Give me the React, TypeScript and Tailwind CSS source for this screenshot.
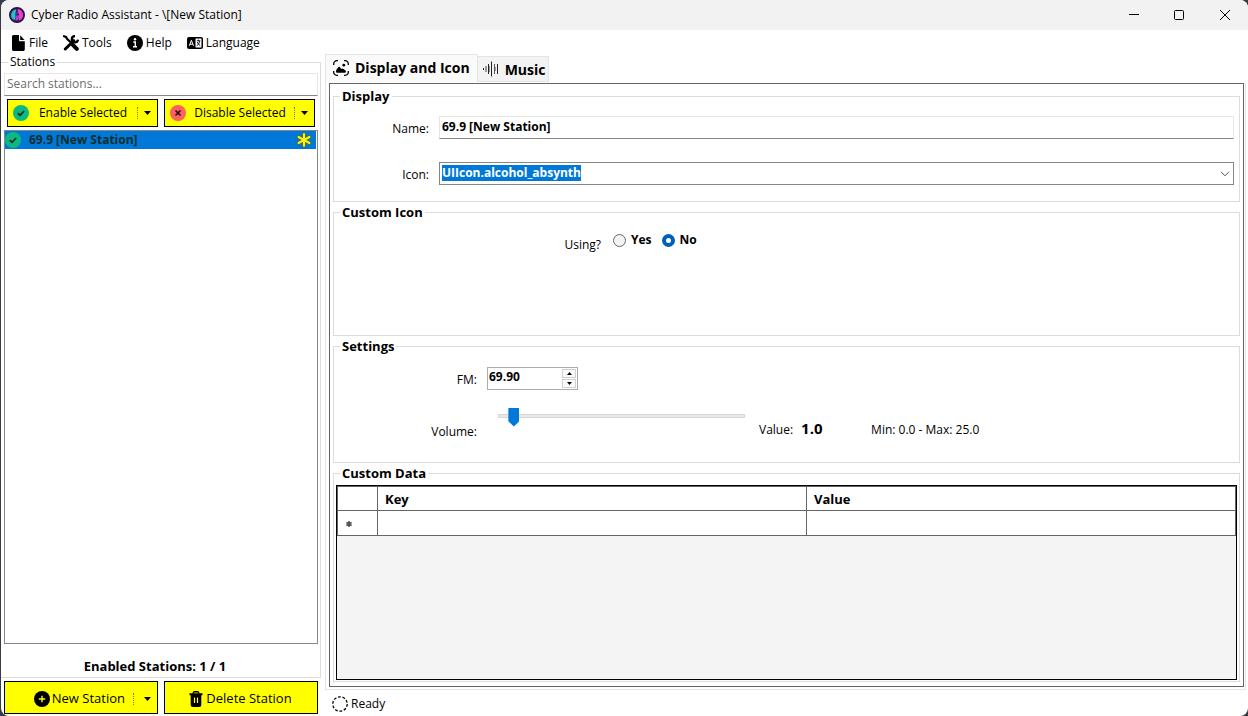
import { useState, type ReactNode } from "react"
import clsx from "clsx"

const menuItems = [
  { label: "File", icon: <FileIcon /> },
  { label: "Tools", icon: <ToolsIcon /> },
  { label: "Help", icon: <InfoIcon /> },
  { label: "Language", icon: <LanguageIcon /> },
]

const stations = [{ id: 1, name: "69.9 [New Station]", enabled: true }]

function LogoIcon() {
  return (
    <svg className="size-4" viewBox="0 0 16 16">
      <circle cx="8" cy="8" r="7.3" fill="#3a1a55" stroke="#2a1442" strokeWidth="1.4" />
      <path d="M7.200 2.200A6 6 0 0 0 3.800 12.300l1.800.7 1-3V5.500z" fill="#19c5c9" />
      <path d="M8.800 2A6.100 6.100 0 0 1 12 12.600l-2 .8-1-3.600 1.200-2.600-1.600-1.600z" fill="#e83fd0" />
      <path d="M6.600 5.500l1.900-1.700v4l1.200 5.200-3.100.6z" fill="#5b2a8c" />
      <path d="M6.500 10.200l2-2.200.6 5-2.400.6z" fill="#b344c6" />
    </svg>
  )
}

function FileIcon() {
  return (
    <svg className="size-4" viewBox="0 0 16 16" fill="#000">
      <path d="M3.600 0H9v5.200c0 .7.5 1.100 1.100 1.100h4.700v7.900c0 1-.7 1.800-1.600 1.800H3.600C2.700 16 2 15.200 2 14.200V1.800C2 .8 2.700 0 3.600 0z" />
      <path d="M10.200.3l4.300 4.700h-4.300z" />
    </svg>
  )
}

function ToolsIcon() {
  return (
    <svg className="size-4" viewBox="0 0 16 16" fill="none" stroke="#000">
      <path d="M2.300 14l8.500-8.300" strokeWidth="3" strokeLinecap="round" />
      <path d="M12 1.200a3.100 3.100 0 1 0 3 3.400" strokeWidth="2.300" />
      <path d="M1 1.200l2 .8 1.200 2 3.500 3.300" strokeWidth="2.200" strokeLinecap="round" />
      <path d="M9.800 9.800l4 4" strokeWidth="4" strokeLinecap="round" />
    </svg>
  )
}

function InfoIcon() {
  return (
    <svg className="size-4" viewBox="0 0 16 16">
      <circle cx="8" cy="8" r="8" fill="#000" />
      <circle cx="8" cy="4.300" r="1.200" fill="#fff" />
      <path d="M6.300 7h2v4.500M6 11.700h4" fill="none" stroke="#fff" strokeWidth="1.400" />
    </svg>
  )
}

function LanguageIcon() {
  return (
    <svg className="size-4" viewBox="0 0 16 16" fill="none">
      <rect x="0" y="2" width="16" height="12" rx="2" fill="#000" />
      <rect x="8.500" y="3.500" width="6" height="9" rx=".5" fill="#fff" />
      <path d="M2.300 10.800L4.400 5.300l2.100 5.500M3 9.200h2.800" stroke="#fff" />
      <path d="M9.800 5.800h3.500M11.500 4.600v1.200M12.700 6c-.3 2-1.400 3.800-3 4.800M10.300 7c.6 1.600 1.600 2.900 3 3.800" stroke="#000" strokeWidth=".9" />
    </svg>
  )
}

function EnabledIcon() {
  return (
    <svg className="size-4 shrink-0" viewBox="0 0 16 16" fill="none">
      <circle cx="8" cy="8" r="8" fill="#0bba82" />
      <path d="M4.800 8.200l2.200 2.100L11.200 6" stroke="#10251c" strokeWidth="1.700" />
    </svg>
  )
}

function DisabledIcon() {
  return (
    <svg className="size-4 shrink-0" viewBox="0 0 16 16" fill="none">
      <circle cx="8" cy="8" r="8" fill="#fe5f5f" />
      <path d="M5.500 5.500l5 5M10.500 5.500l-5 5" stroke="#2b0f12" strokeWidth="1.700" />
    </svg>
  )
}

function PlusIcon() {
  return (
    <svg className="size-4" viewBox="0 0 16 16">
      <circle cx="8" cy="8" r="8" fill="#000" />
      <path d="M8 4.800v6.400M4.800 8h6.400" stroke="#ff0" strokeWidth="1.400" />
    </svg>
  )
}

function TrashIcon() {
  return (
    <svg className="size-4" viewBox="0 0 16 16">
      <path d="M5.200 2.500c0-1.200.6-1.700 1.500-1.700h2.600c.9 0 1.500.5 1.500 1.700" fill="none" stroke="#000" strokeWidth="1.500" />
      <path d="M1.500 2.200h13v2h-13z" />
      <path d="M2.700 4h10.600v9.700c0 1.300-.9 2.300-2.200 2.300H4.900c-1.300 0-2.200-1-2.200-2.300z" />
      <path d="M6.500 6.500v5.500M9.500 6.500v5.500" stroke="#ff0" strokeWidth="1.200" />
    </svg>
  )
}

function AsteriskIcon() {
  return (
    <svg className="size-4 shrink-0" viewBox="0 0 16 16">
      <g strokeLinecap="round">
        <path d="M8 2.200v11.600M2.600 5l10.800 6M13.400 5L2.600 11" stroke="#5c6200" strokeWidth="3.600" />
        <path d="M8 2.200v11.600M2.600 5l10.800 6M13.400 5L2.600 11" stroke="#f7f01a" strokeWidth="2.200" />
      </g>
    </svg>
  )
}

function PictureIcon() {
  return (
    <svg className="size-4" viewBox="0 0 16 16" fill="none" stroke="#000" strokeWidth="1.300">
      <path d="M.7 5V3.800A3.100 3.100 0 0 1 3.800.7H5M11 .7h1.200a3.100 3.100 0 0 1 3.100 3.100V5M15.300 11v1.200a3.100 3.100 0 0 1-3.100 3.100H11M5 15.300H3.800a3.100 3.100 0 0 1-3.100-3.100V11" />
      <path d="M3 11.400c0-1.700 1.300-2.700 1.900-3.700.7-1.300 1.700-1.300 2.500 0l.9 1.300c.6-.7 1.600-.7 2.200 0 .9.900 2.500 1.400 2.500 2.600 0 .8-.5 1.200-1.200 1.200H4.300c-.8 0-1.300-.5-1.300-1.400z" fill="#000" stroke="none" />
      <circle cx="10.800" cy="5.200" r="1.400" fill="#000" stroke="none" />
    </svg>
  )
}

function WaveIcon() {
  return (
    <svg className="size-4" viewBox="0 0 16 16" fill="none" strokeWidth="1">
      <path d="M.5 7v2M5.500 3v10M8.500.5v15M14.500 3v10" stroke="#222" />
      <path d="M2.500 5v6M3.500 5v6M6.500 5v6M11.500 3v10M12.500 6v4" stroke="#999" />
      <path d="M11.500 3v10" stroke="#555" />
    </svg>
  )
}

function SplitButton({ label, icon }: { label: string; icon: ReactNode }) {
  return (
    <div className="flex border border-black bg-[#ffff00]">
      <button type="button" className="flex flex-1 items-center pl-[5px]">
        {icon}
        <span className="flex-1 text-center">{label}</span>
      </button>
      <button type="button" aria-label={`${label} options`} className="flex w-5 items-center">
        <span className="h-3 border-l border-dotted border-gray-500" />
        <svg className="mx-auto h-1 w-[7px]" viewBox="0 0 7 4">
          <path d="M0 0h7L3.500 4z" />
        </svg>
      </button>
    </div>
  )
}

function GroupBox({ title, className, children }: { title: string; className?: string; children: ReactNode }) {
  return (
    <fieldset className={clsx("min-w-0 border border-[#dcdcdc]", className)}>
      <legend className="ml-1.5 px-0.5 text-[13px] leading-4 font-bold">{title}</legend>
      {children}
    </fieldset>
  )
}

function StationsPanel() {
  const [search, setSearch] = useState("")
  const enabledCount = stations.filter((s) => s.enabled).length

  return (
    <aside className="flex w-80 shrink-0 flex-col">
      <fieldset className="flex min-h-0 flex-1 flex-col border border-l-0 border-[#dcdcdc] pr-0.5 pl-[3px]">
        <legend className="ml-1 px-0.5 leading-4">Stations</legend>
        <input
          type="search"
          aria-label="Search stations"
          placeholder="Search stations..."
          value={search}
          onChange={(e) => setSearch(e.target.value)}
          className="mt-[3px] h-[23px] w-full border border-[#e6e6e6] border-b-[#868686] px-0.5 pb-0.5 outline-none placeholder:text-[#6d6d6d]"
        />
        <div className="mx-[3px] mt-[3px] grid h-7 grid-cols-2 gap-1.5">
          <SplitButton label="Enable Selected" icon={<EnabledIcon />} />
          <SplitButton label="Disable Selected" icon={<DisabledIcon />} />
        </div>
        <ul className="mt-[3px] min-h-0 flex-1 border border-[#828790] pr-px">
          {stations.map((station) => (
            <li key={station.id} className="flex h-[18px] items-center bg-[#0078d7] pr-1 font-bold text-[#0a2d2a]">
              <EnabledIcon />
              <span className="flex-1 pl-2">{station.name}</span>
              <AsteriskIcon />
            </li>
          ))}
        </ul>
        <p className="flex h-[33px] items-end justify-center pr-3 pb-[3px] text-[13px] leading-4 font-bold">
          Enabled Stations: {enabledCount} / {stations.length}
        </p>
      </fieldset>
      <div className="mx-[3px] mt-[3px] mb-0.5 grid h-[33px] grid-cols-2 gap-1.5 text-[13px]">
        <div className="flex border border-black bg-[#ffff00] pt-0.5">
          <button type="button" className="flex flex-1 items-center justify-end gap-0.5 pr-2 whitespace-nowrap">
            <PlusIcon />
            New Station
          </button>
          <button type="button" aria-label="New Station options" className="flex w-6 items-center">
            <span className="h-3 border-l border-dotted border-gray-500" />
            <svg className="ml-2.5 h-1 w-[7px]" viewBox="0 0 7 4">
              <path d="M0 0h7L3.500 4z" />
            </svg>
          </button>
        </div>
        <button type="button" className="flex items-center justify-center gap-0.5 border border-black bg-[#ffff00] pt-0.5 pr-0.5">
          <TrashIcon />
          Delete Station
        </button>
      </div>
    </aside>
  )
}

function DisplayTab() {
  const [name, setName] = useState("69.9 [New Station]")
  const [usingIcon, setUsingIcon] = useState(false)
  const [fm, setFm] = useState(69.9)
  const [volume, setVolume] = useState(1)

  return (
    <div className="flex min-h-0 flex-1 flex-col gap-0.5 border border-[#646464] px-[3px] pt-1 pb-1">
      <GroupBox title="Display" className="h-[114px]">
        <div className="mt-3 flex flex-col gap-[23px] pr-[5px]">
          <div className="flex h-[23px] gap-2.5">
            <label htmlFor="name" className="w-[95px] pt-[5px] text-right leading-4">Name:</label>
            <input
              id="name"
              value={name}
              onChange={(e) => setName(e.target.value)}
              className="min-w-0 flex-1 border border-[#e6e6e6] border-b-[#868686] px-0.5 pb-0.5 font-bold outline-none"
            />
          </div>
          <div className="flex h-[23px] gap-2.5">
            <label htmlFor="icon" className="w-[95px] pt-[5px] text-right leading-4">Icon:</label>
            <div className="flex min-w-0 flex-1 items-start justify-between border border-[#868686] px-0.5 pt-0.5">
              <select id="icon" className="field-sizing-content h-4 appearance-none bg-[#0078d7] leading-4 font-bold text-white outline-none">
                <option>UIIcon.alcohol_absynth</option>
              </select>
              <svg className="mt-1.5 mr-px h-1.5 w-2.5" viewBox="0 0 10 6" fill="none" stroke="#555">
                <path d="M1 .8l4 4 4-4" />
              </svg>
            </div>
          </div>
        </div>
      </GroupBox>

      <GroupBox title="Custom Icon" className="h-[132px]">
        <div className="mt-3 flex gap-3 font-bold">
          <span id="using" className="w-[267px] pt-[5px] text-right leading-4 font-normal">Using?</span>
          <div role="radiogroup" aria-labelledby="using" className="flex h-4 items-center gap-2.5">
            {[true, false].map((value) => (
              <label key={String(value)} className="flex items-center gap-[5px]">
                <input
                  type="radio"
                  name="using-icon"
                  checked={usingIcon === value}
                  onChange={() => setUsingIcon(value)}
                  className="size-[13px] appearance-none rounded-full border border-[#666] bg-[#f3f3f3] checked:border-4 checked:border-[#005fb8] checked:bg-white"
                />
                {value ? "Yes" : "No"}
              </label>
            ))}
          </div>
        </div>
      </GroupBox>

      <GroupBox title="Settings" className="h-[125px]">
        <div className="mt-[13px] flex gap-2.5">
          <label htmlFor="fm" className="w-[143px] pt-[5px] text-right leading-4">FM:</label>
          <div className="flex h-[23px] w-[91px] justify-between border border-[#acacac] p-px">
            <input
              id="fm"
              inputMode="decimal"
              value={fm.toFixed(2)}
              onChange={(e) => setFm(Number(e.target.value) || 0)}
              className="h-4 w-16 font-bold outline-none"
            />
            <div className="flex w-3.5 flex-col justify-between">
              <button type="button" aria-label="Increase FM" onClick={() => setFm(fm + 0.1)} className="flex h-[9px] items-center justify-center border border-[#d0d0d0] bg-[#fbfbfb]">
                <svg className="h-[3px] w-[5px]" viewBox="0 0 5 3"><path d="M2.500 0L5 3H0z" /></svg>
              </button>
              <button type="button" aria-label="Decrease FM" onClick={() => setFm(fm - 0.1)} className="flex h-[9px] items-center justify-center border border-[#d0d0d0] bg-[#fbfbfb]">
                <svg className="h-[3px] w-[5px]" viewBox="0 0 5 3"><path d="M0 0h5L2.500 3z" /></svg>
              </button>
            </div>
          </div>
        </div>
        <div className="mt-4 flex items-start leading-4">
          <label htmlFor="volume" className="w-[143px] pt-[18px] text-right">Volume:</label>
          <input
            id="volume"
            type="range"
            min={0}
            max={25}
            step={0.1}
            value={volume}
            onChange={(e) => setVolume(Number(e.target.value))}
            className="ml-[21px] h-[19px] w-[247px] appearance-none bg-transparent [&::-webkit-slider-runnable-track]:h-1 [&::-webkit-slider-runnable-track]:border [&::-webkit-slider-runnable-track]:border-[#d6d6d6] [&::-webkit-slider-runnable-track]:bg-[#e7eaea] [&::-webkit-slider-thumb]:-mt-[7px] [&::-webkit-slider-thumb]:h-[19px] [&::-webkit-slider-thumb]:w-[11px] [&::-webkit-slider-thumb]:appearance-none [&::-webkit-slider-thumb]:bg-[#0078d7] [&::-webkit-slider-thumb]:[clip-path:polygon(0_0,100%_0,100%_72%,50%_100%,0_72%)]"
          />
          <div className="ml-3.5 flex pt-4">
            <span>Value:</span>
            <output htmlFor="volume" className="ml-2 w-[70px] text-[15px] leading-3 font-bold">{volume.toFixed(1)}</output>
            <span>Min: 0.0 - Max: 25.0</span>
          </div>
        </div>
      </GroupBox>

      <GroupBox title="Custom Data" className="flex min-h-0 flex-1 flex-col">
        <div className="mx-0.5 mb-px mt-1 min-h-0 flex-1 border border-black bg-[#f4f4f4]">
          <table className="w-full table-fixed border-collapse border border-[#646464] bg-white text-left text-[13px]">
            <thead>
              <tr className="h-6">
                <th className="w-10 border border-[#646464]" aria-label="Row" />
                <th className="border border-[#646464] px-[7px] leading-4">Key</th>
                <th className="border border-[#646464] px-[7px] leading-4">Value</th>
              </tr>
            </thead>
            <tbody>
              <tr className="h-[25px]">
                <th className="border border-[#646464] pt-0.5 pl-2">
                  <svg className="size-1.5" viewBox="0 0 6 6" stroke="#555" strokeWidth="1.600">
                    <path d="M3 0v6M.4 1.500l5.200 3M5.600 1.500l-5.200 3" />
                  </svg>
                </th>
                <td className="border border-[#646464]" />
                <td className="border border-[#646464]" />
              </tr>
            </tbody>
          </table>
        </div>
      </GroupBox>
    </div>
  )
}

export default function App() {
  return (
    <div className="h-screen bg-[#3a3a42] pl-px font-['Open_Sans',sans-serif] text-[12px] text-black">
      <div className="flex h-full flex-col overflow-hidden rounded-lg bg-white">
        <header className="flex h-[30px] shrink-0 items-center bg-[#f2f2f2] pl-2">
          <LogoIcon />
          <h1 className="ml-1.5 flex-1">Cyber Radio Assistant - \[New Station]</h1>
          <button type="button" aria-label="Minimize" className="flex h-full w-[45px] items-center justify-center">
            <svg className="h-2.5 w-2.5" viewBox="0 0 10 10" stroke="#000"><path d="M0 4.500h10" /></svg>
          </button>
          <button type="button" aria-label="Maximize" className="flex h-full w-[46px] items-center justify-center">
            <svg className="h-2.5 w-2.5" viewBox="0 0 10 10" fill="none" stroke="#000"><rect x=".5" y=".5" width="9" height="9" rx="1" /></svg>
          </button>
          <button type="button" aria-label="Close" className="flex h-full w-[46px] items-center justify-center">
            <svg className="h-2.5 w-2.5" viewBox="0 0 10 10" stroke="#000"><path d="M0 0l10 10M10 0L0 10" /></svg>
          </button>
        </header>
        <nav className="flex h-6 shrink-0 items-center gap-[15px] pt-0.5 pl-[9px]">
          {menuItems.map((item) => (
            <button key={item.label} type="button" className="flex items-center gap-[3px] leading-4">
              {item.icon}
              {item.label}
            </button>
          ))}
        </nav>
        <div className="flex min-h-0 flex-1">
          <StationsPanel />
          <main className="ml-1 flex min-w-0 flex-1 flex-col">
            <div role="tablist" className="flex h-7 items-end text-[14px] font-bold">
              <button type="button" role="tab" aria-selected="true" className="flex h-7 items-center gap-1.5 border border-b-0 border-[#e5e5e5] bg-[#fafafa] px-[7px] pb-0.5 whitespace-nowrap">
                <PictureIcon />
                Display and Icon
              </button>
              <button type="button" role="tab" aria-selected="false" className="flex h-[26px] items-center gap-1.5 border border-l-0 border-[#e5e5e5] bg-[#f3f3f3] pr-[3px] pl-[5px]">
                <WaveIcon />
                Music
              </button>
            </div>
            <div className="mr-0.5 flex min-h-0 flex-1 flex-col border border-t-0 border-[#e5e5e5] pt-px pr-px pb-0.5 pl-[3px]">
              <DisplayTab />
            </div>
            <footer className="flex h-[26px] shrink-0 items-center gap-[3px] pt-0.5 pl-[7px]">
              <svg className="size-4" viewBox="0 0 16 16" fill="none" stroke="#000" strokeWidth="1.300">
                <circle cx="8" cy="8" r="7.200" strokeDasharray="2.800 1.724" />
              </svg>
              Ready
            </footer>
          </main>
        </div>
      </div>
    </div>
  )
}
